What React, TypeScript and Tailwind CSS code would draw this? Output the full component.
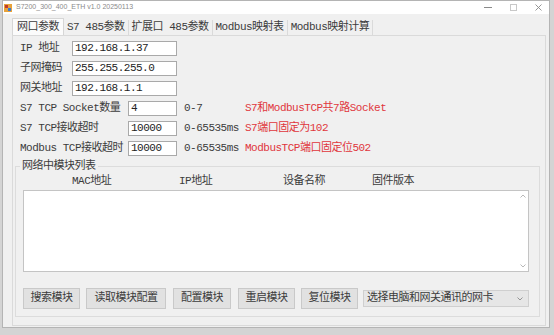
const font = "font-['Liberation_Mono','Noto_Sans_CJK_SC',monospace] text-[11px] tracking-[-0.5px]";

const tabs = ["S7 485参数", "扩展口 485参数", "Modbus映射表", "Modbus映射计算"];

const rows = [
  { label: "IP 地址", value: "192.168.1.37", wide: true },
  { label: "子网掩码", value: "255.255.255.0", wide: true },
  { label: "网关地址", value: "192.168.1.1", wide: true },
  { label: "S7 TCP Socket数量", value: "4", range: "0-7", note: "S7和ModbusTCP共7路Socket" },
  { label: "S7 TCP接收超时", value: "10000", range: "0-65535ms", note: "S7端口固定为102" },
  { label: "Modbus TCP接收超时", value: "10000", range: "0-65535ms", note: "ModbusTCP端口固定位502" },
];

const buttons = [
  { text: "搜索模块", w: "w-[57px]" },
  { text: "读取模块配置", w: "w-[80px]" },
  { text: "配置模块", w: "w-[58px]" },
  { text: "重启模块", w: "w-[57px]" },
  { text: "复位模块", w: "w-[57px]" },
];

const AppIcon = () => (
  <svg width="8" height="8" viewBox="0 0 8 8">
    <rect x="0" y="0" width="8" height="8" fill="#e8a23a" />
    <rect x="1" y="1" width="3" height="3" fill="#c0392b" />
    <rect x="4" y="4" width="3" height="3" fill="#3a7bd5" />
  </svg>
);

export default function App() {
  return (
    <div className={`w-[554px] h-[335px] bg-[#d4d4d4] overflow-hidden ${font} text-[#3c3c3c]`}>
      <div className="ml-[2px] w-[548px] h-[328px] bg-[#f0f0f0] border border-[#b4b4b4] flex flex-col">
        {/* title bar */}
        <div className="h-[13px] bg-white flex items-center">
          <div className="ml-[1px]">
            <AppIcon />
          </div>
          <span className="ml-[4px] font-['Liberation_Sans',sans-serif] text-[7px] tracking-normal text-[#8a8a8a]">
            S7200_300_400_ETH v1.0 20250113
          </span>
          <div className="ml-auto flex items-center gap-[18px] mr-[7px]">
            <div className="w-[8px] h-px bg-[#8a8a8a]" />
            <div className="w-[7px] h-[7px] border border-[#c8c8c8]" />
            <svg width="7" height="7" viewBox="0 0 7 7">
              <path d="M0.5 0.5 L6.5 6.5 M6.5 0.5 L0.5 6.5" stroke="#8a8a8a" strokeWidth="0.9" />
            </svg>
          </div>
        </div>

        {/* tabs */}
        <div className="mt-[4px] ml-[9px] flex items-end h-[17px]">
          <div className="h-[17px] px-[4px] bg-[#fbfbfb] border border-b-0 border-[#d6d6d6] flex items-center">
            网口参数
          </div>
          {tabs.map((t) => (
            <div key={t} className="h-[15px] px-[3px] flex items-center border-r border-[#dadada]">
              {t}
            </div>
          ))}
        </div>

        {/* panel */}
        <div className="ml-[9px] mr-[3px] mb-[1px] flex-1 border border-[#dadada] bg-[#f0f0f0] pt-[2px] flex flex-col">
          <div className="pl-[7px] flex flex-col">
            {rows.map((r) => (
              <div key={r.label} className="h-[20px] flex items-center">
                <div className={r.wide ? "w-[52px]" : "w-[108px]"}>{r.label}</div>
                <div
                  className={`${r.wide ? "w-[105px]" : "w-[49px]"} h-[15px] bg-white border border-[#a9a9a9] flex items-center pl-[2px] text-[#222]`}
                >
                  {r.value}
                </div>
                {r.range && <div className="ml-[7px] w-[61px]">{r.range}</div>}
                {r.note && <div className="text-[#e0363c]">{r.note}</div>}
              </div>
            ))}
          </div>

          <fieldset className="mt-[1px] ml-[2px] mr-[5px] border border-[#dcdcdc] pl-[7px] pr-[10px] pb-[7px]">
            <legend className="-ml-[3px] px-[2px] leading-[14px]">网络中模块列表</legend>
            <div className="h-[14px] flex items-center pl-[49px] mt-[1px]">
              <div className="w-[107px]">MAC地址</div>
              <div className="w-[104px]">IP地址</div>
              <div className="w-[89px]">设备名称</div>
              <div>固件版本</div>
            </div>
            <div className="mt-[2px] h-[82px] bg-white border border-[#c4c4c4] flex justify-end">
              <div className="w-[10px] flex flex-col justify-between items-center py-[3px]">
                <svg width="6" height="4" viewBox="0 0 6 4">
                  <path d="M0.5 3.5 L3 1 L5.5 3.5" stroke="#b0b0b0" fill="none" strokeWidth="0.9" />
                </svg>
                <svg width="6" height="4" viewBox="0 0 6 4">
                  <path d="M0.5 0.5 L3 3 L5.5 0.5" stroke="#b0b0b0" fill="none" strokeWidth="0.9" />
                </svg>
              </div>
            </div>
            <div className="mt-[16px] flex items-center">
              {buttons.map((b, i) => (
                <div
                  key={b.text}
                  className={`${b.w} ${i === 0 ? "" : i === 1 || i === 4 ? "ml-[6px]" : "ml-[7px]"} h-[21px] bg-[#e1e1e1] border border-[#c9c9c9] flex items-center justify-center`}
                >
                  {b.text}
                </div>
              ))}
              <div className="ml-[5px] flex-1 h-[17px] bg-[#e6e6e6] border border-[#cfcfcf] flex items-center pl-[3px] pr-[5px]">
                <span>选择电脑和网关通讯的网卡</span>
                <svg className="ml-auto" width="6" height="4" viewBox="0 0 6 4">
                  <path d="M0.5 0.5 L3 3 L5.5 0.5" stroke="#8a8a8a" fill="none" strokeWidth="0.9" />
                </svg>
              </div>
            </div>
          </fieldset>
        </div>
      </div>
    </div>
  );
}
